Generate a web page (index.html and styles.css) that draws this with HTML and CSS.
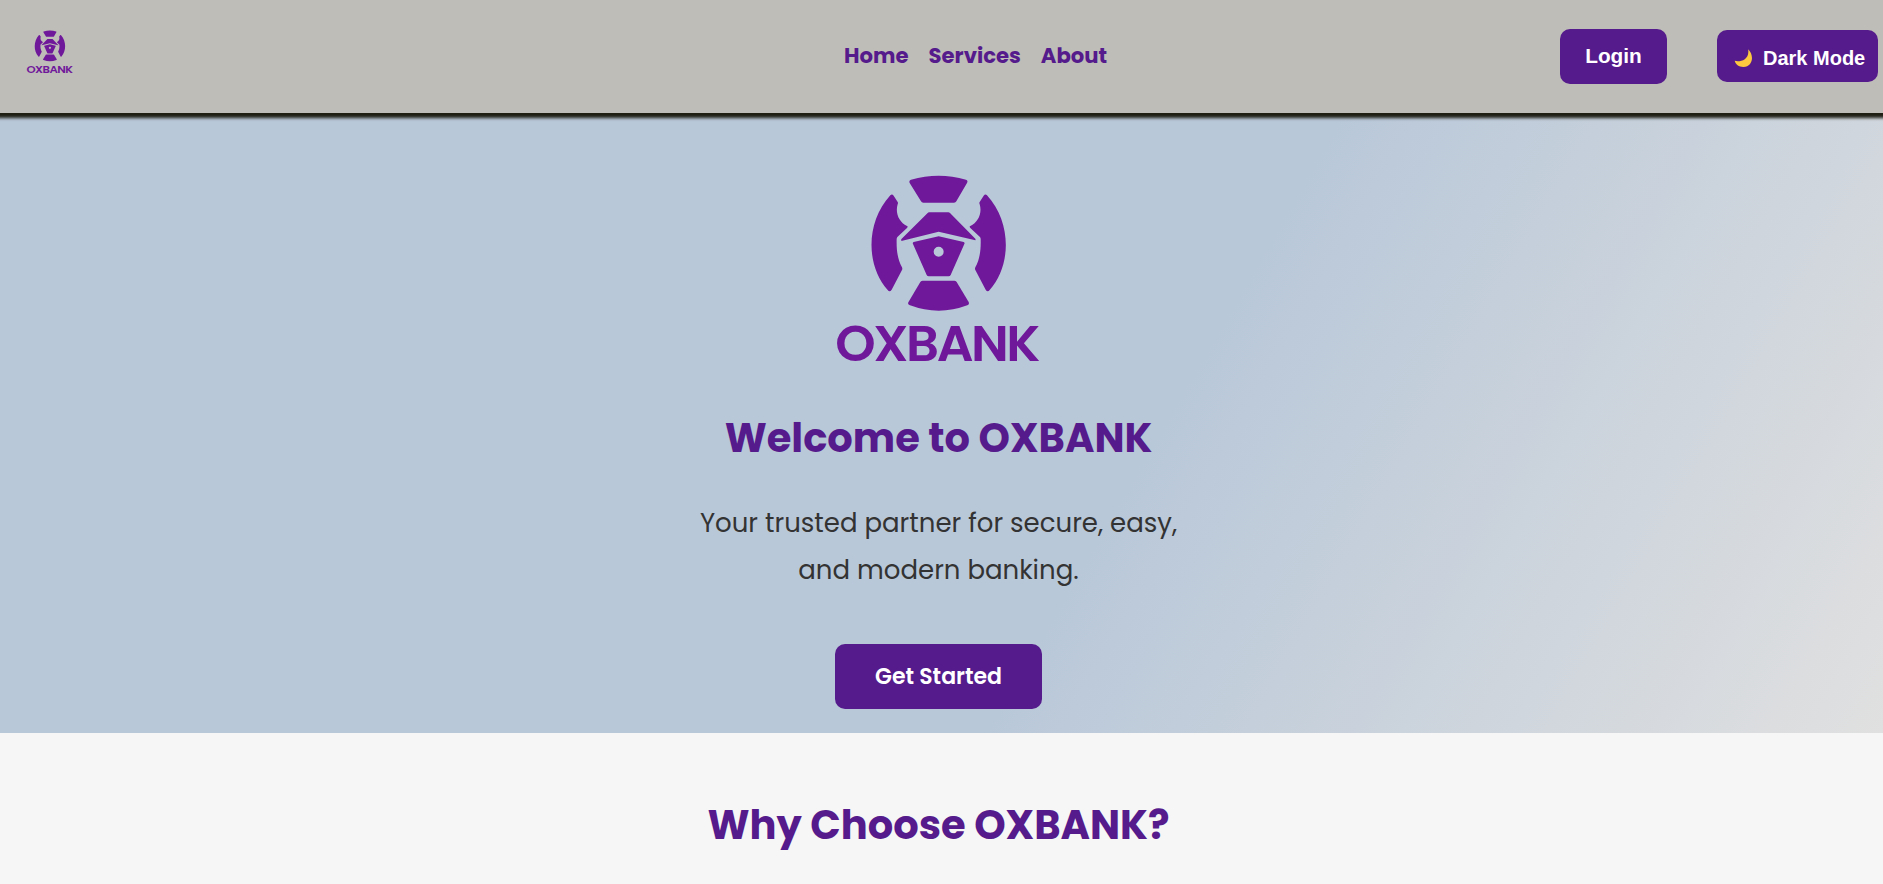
FILE: index.html
```html
<!DOCTYPE html>
<html lang="en">
<head>
<meta charset="utf-8">
<title>OXBANK</title>
<link rel="stylesheet" href="styles.css">
</head>
<body>
<header class="header">
  <svg class="header-logo" viewBox="40 40 630 576" role="img" aria-label="OXBANK">
    <g id="oxbank">
      <path d="M274 60Q357 36 439 60Q446 63 442 70L410 125Q408 129 403 129H311Q306 129 304 125L270 70Q267 62 274 60Z"/>
      <path d="M212 107Q217 102 222 108L234 127Q236 130 234 134C226 160 238 188 262 199Q266 201 262 205L234 231Q231 234 231 238C230 272 234 300 247 323Q249 327 247 331L216 390Q210 399 204 391C140 320 136 190 212 107Z"/>
      <path d="M502 107Q497 102 492 108L480 127Q478 130 480 134C488 160 476 188 452 199Q448 201 452 205L480 231Q483 234 483 238C484 272 480 300 467 323Q465 327 467 331L498 390Q504 399 510 391C574 320 578 190 502 107Z"/>
      <path d="M328 158H386Q389 158 391 160L467 237Q470 243 464 241L357 216L248 243Q241 243 246 237L324 160Q326 158 328 158Z"/>
      <path fill-rule="evenodd" d="M282 247L357 230L432 247Q436 249 434 253L393 346Q391 350 387 350H327Q323 350 321 346L280 253Q278 249 282 247ZM357 261A15 15 0 1 0 357 291A15 15 0 1 0 357 261Z"/>
      <path d="M309 363H404Q408 363 411 367L447 427Q450 434 443 437Q357 469 271 437Q263 434 266 428L302 367Q305 363 309 363Z"/>
      <text class="wordmark" x="47" y="603" textLength="608" lengthAdjust="spacingAndGlyphs">OXBANK</text>
    </g>
  </svg>
  <nav class="nav">
    <a>Home</a>
    <a>Services</a>
    <a>About</a>
  </nav>
  <div class="actions">
    <button class="btn login">Login</button>
    <button class="btn theme">
      <svg class="moon" viewBox="0 0 18 18"><path d="M13.6.2C20 6 18.5 17.6 9 17.9C4.500 18 1 15.500.2 11.800C5 13.500 15.500 11 13.600.2Z"/></svg>
      <span>Dark Mode</span>
    </button>
  </div>
</header>

<section class="hero">
  <svg class="hero-logo" viewBox="40 40 630 576" role="img" aria-label="OXBANK"><use href="#oxbank"/></svg>
  <h1 class="title">Welcome to OXBANK</h1>
  <p class="lead">Your trusted partner for secure, easy,<br>and modern banking.</p>
  <button class="btn start">Get Started</button>
</section>

<section class="why">
  <h2 class="title">Why Choose OXBANK?</h2>
</section>
</body>
</html>
```

FILE: styles.css
```css
* { box-sizing: border-box; }

body {
  margin: 0;
  height: 884px;
  overflow: hidden;
  background: #f6f6f6;
  font-family: Poppins, Inter, sans-serif;
}

.wordmark {
  font-family: Poppins, Lato, sans-serif;
  font-weight: 600;
  font-size: 148px;
  letter-spacing: -7px;
}

.header {
  position: relative;
  display: grid;
  grid-template-columns: 844px 1fr auto;
  align-items: center;
  height: 113px;
  padding-right: 5px;
  background: #bebdb8;
  box-shadow: 0 2px 3px 3px #1f1f14;
}

.header-logo {
  width: 47.6px;
  height: 43.5px;
  margin: -9px 0 0 26px;
  overflow: visible;
  fill: #70189a;
}

.nav {
  display: flex;
  gap: 20px;
  margin-top: -2px;
  color: #551a8b;
  font-size: 21.2px;
  font-weight: 700;
}

.actions {
  display: flex;
  align-items: center;
  gap: 50px;
}

.btn {
  border: 0;
  padding: 0;
  border-radius: 10px;
  background: #551a8b;
  color: #fff;
  font-family: "Liberation Sans", Arial, sans-serif;
  font-size: 20px;
  font-weight: 700;
}

.login {
  width: 107px;
  height: 55px;
  padding-bottom: 2px;
  font-size: 20.8px;
}

.theme {
  display: flex;
  align-items: center;
  width: 161px;
  height: 52px;
  margin-top: -1px;
  padding: 4px 0 0 17px;
  gap: 10px;
}

.moon {
  width: 19px;
  height: 18px;
  fill: #fcc93f;
}

.hero {
  display: flex;
  flex-direction: column;
  align-items: center;
  height: 620px;
  padding: 60px 6px 0 0;
  background: linear-gradient(120deg, #b9c8d9 60%, #e0e0e0 100%);
}

.hero-logo {
  width: 210px;
  height: 192px;
  margin-right: 1px;
  overflow: visible;
  fill: #70189a;
}

.title {
  margin: 0;
  color: #551a8b;
  font-size: 40px;
  font-weight: 700;
  line-height: 60px;
  white-space: nowrap;
}

.hero .title { margin-top: 43px; }

.lead {
  margin: 32px 0 0;
  color: #333;
  font-size: 26px;
  line-height: 47px;
  text-align: center;
  white-space: nowrap;
}

.start {
  width: 207px;
  height: 65px;
  margin-top: 50px;
  font-family: Poppins, Inter, sans-serif;
  font-size: 22px;
  font-weight: 600;
}

.why {
  display: flex;
  justify-content: center;
  padding: 62px 6px 0 0;
}
```
